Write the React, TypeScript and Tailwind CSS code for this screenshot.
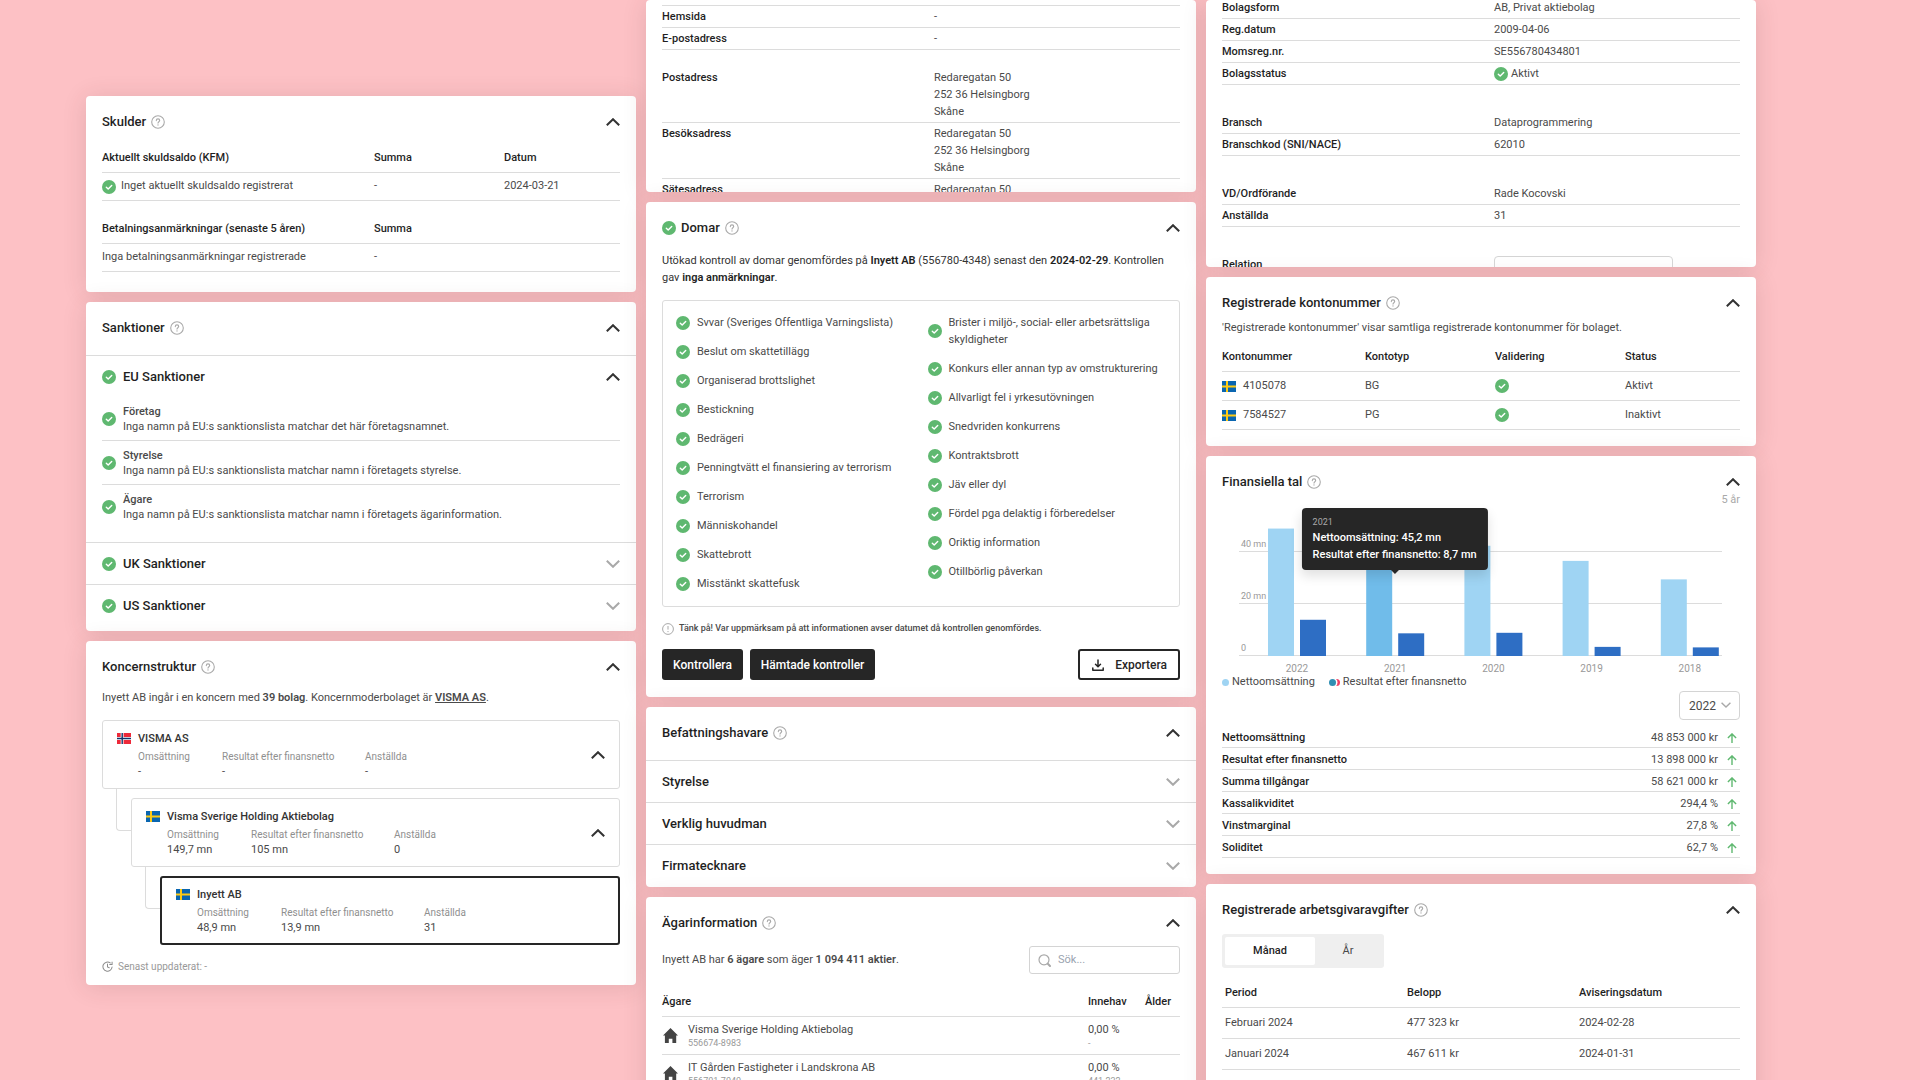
import { useState, type ReactNode } from 'react';
import clsx from 'clsx';

const GREEN = '#5fb870';

function CheckIcon() {
  return (
    <svg viewBox="0 0 14 14" className="h-3.5 w-3.5 shrink-0" aria-hidden="true">
      <circle cx="7" cy="7" r="7" fill={GREEN} />
      <path d="M4.3 7.2 6.2 9l3.5-3.6" fill="none" stroke="#fff" strokeWidth="1.4" strokeLinecap="round" strokeLinejoin="round" />
    </svg>
  );
}

function HelpIcon() {
  return (
    <svg viewBox="0 0 14 14" className="h-3.5 w-3.5 shrink-0" fill="none" stroke="#a9a9a9" aria-hidden="true">
      <circle cx="7" cy="7" r="6.3" strokeWidth="1.1" />
      <path d="M5.3 5.6c0-1 .7-1.7 1.7-1.7s1.7.7 1.7 1.6c0 1.2-1.7 1.3-1.7 2.6" strokeWidth="1.1" strokeLinecap="round" />
      <circle cx="7" cy="9.9" r=".7" fill="#a9a9a9" stroke="none" />
    </svg>
  );
}

function Chevron({ up = false, className = 'h-2 w-3.5' }: { up?: boolean; className?: string }) {
  return (
    <svg
      viewBox="0 0 14 8"
      className={clsx('shrink-0', className)}
      fill="none"
      stroke={up ? '#333' : '#a9a9a9'}
      strokeWidth="2"
      strokeLinejoin="miter"
      aria-hidden="true"
    >
      <path d={up ? 'M.8 7.3 7 1.2l6.2 6.1' : 'M.8.7 7 6.8 13.2.7'} />
    </svg>
  );
}

function FlagSE() {
  return (
    <svg viewBox="0 0 14 11" className="h-[11px] w-3.5 shrink-0" aria-hidden="true">
      <path fill="#0a66b0" d="M0 0h14v11H0z" />
      <path fill="#fdca14" d="M4 0h2v11H4zM0 4.5h14v2H0z" />
    </svg>
  );
}

function FlagNO() {
  return (
    <svg viewBox="0 0 14 11" className="h-[11px] w-3.5 shrink-0" aria-hidden="true">
      <path fill="#ed2939" d="M0 0h14v11H0z" />
      <path fill="#fff" d="M3.7 0h2.9v11H3.7zM0 4.1h14v2.8H0z" />
      <path fill="#12346b" d="M4.5 0h1.4v11H4.5zM0 4.8h14v1.4H0z" />
    </svg>
  );
}

function Card({ children, className }: { children: ReactNode; className?: string }) {
  return (
    <section className={clsx('overflow-hidden rounded-[4px] bg-white shadow-[0_2px_24px_rgba(80,40,45,0.14)]', className)}>
      {children}
    </section>
  );
}

function CardTitle({ title, checked = false }: { title: string; checked?: boolean }) {
  return (
    <header className="flex items-center justify-between px-4 pt-4">
      <h2 className="flex items-center gap-[5px] text-[13px] leading-5 font-medium text-[#1f1f1f]">
        {checked && <CheckIcon />}
        {title}
        <HelpIcon />
      </h2>
      <button aria-label={title}>
        <Chevron up />
      </button>
    </header>
  );
}

function Toggle({ title, open = false, checked = false }: { title: string; open?: boolean; checked?: boolean }) {
  return (
    <button className="flex h-[41px] w-full items-center justify-between px-4 text-left text-[13px] font-medium text-[#1f1f1f]">
      <span className="flex items-center gap-[7px]">
        {checked && <CheckIcon />}
        {title}
      </span>
      <Chevron up={open} />
    </button>
  );
}

const th = 'h-7 border-b border-[#dcdcdc] p-0 text-left font-medium text-[#1f1f1f]';
const td = 'border-b border-[#dcdcdc] p-0';

function Debts() {
  return (
    <Card>
      <CardTitle title="Skulder" />
      <div className="mt-[13px] px-4 pb-5">
        <table className="w-full table-fixed border-separate border-spacing-0">
          <thead>
            <tr>
              <th className={clsx(th, 'w-[272px]')}>Aktuellt skuldsaldo (KFM)</th>
              <th className={clsx(th, 'w-[130px]')}>Summa</th>
              <th className={th}>Datum</th>
            </tr>
          </thead>
          <tbody>
            <tr className="h-7">
              <td className={td}>
                <span className="flex items-center gap-[5px]">
                  <CheckIcon />
                  Inget aktuellt skuldsaldo registrerat
                </span>
              </td>
              <td className={td}>-</td>
              <td className={td}>2024-03-21</td>
            </tr>
          </tbody>
        </table>
        <table className="mt-[15px] w-full table-fixed border-separate border-spacing-0">
          <thead>
            <tr>
              <th className={clsx(th, 'w-[272px]')}>Betalningsanmärkningar (senaste 5 åren)</th>
              <th className={th}>Summa</th>
            </tr>
          </thead>
          <tbody>
            <tr className="h-7">
              <td className={td}>Inga betalningsanmärkningar registrerade</td>
              <td className={td}>-</td>
            </tr>
          </tbody>
        </table>
      </div>
    </Card>
  );
}

const euChecks = [
  { name: 'Företag', text: 'Inga namn på EU:s sanktionslista matchar det här företagsnamnet.' },
  { name: 'Styrelse', text: 'Inga namn på EU:s sanktionslista matchar namn i företagets styrelse.' },
  { name: 'Ägare', text: 'Inga namn på EU:s sanktionslista matchar namn i företagets ägarinformation.' },
];

function Sanctions() {
  return (
    <Card className="pb-[5px]">
      <CardTitle title="Sanktioner" />
      <div className="mt-[17px] border-t border-[#dcdcdc]">
        <Toggle title="EU Sanktioner" open checked />
        <ul className="px-4 pb-[13px]">
          {euChecks.map((check, i) => (
            <li
              key={check.name}
              className={clsx('flex h-11 items-center gap-[7px] leading-[15px]', i < euChecks.length - 1 && 'border-b border-[#dcdcdc]')}
            >
              <CheckIcon />
              <div>
                <p className="font-medium">{check.name}</p>
                <p>{check.text}</p>
              </div>
            </li>
          ))}
        </ul>
      </div>
      <div className="border-t border-[#dcdcdc]">
        <Toggle title="UK Sanktioner" checked />
      </div>
      <div className="border-t border-[#dcdcdc]">
        <Toggle title="US Sanktioner" checked />
      </div>
    </Card>
  );
}

interface Company {
  name: string;
  flag: ReactNode;
  revenue: string;
  result: string;
  employees: string;
}

function CompanyBox({ company, current = false }: { company: Company; current?: boolean }) {
  const figures = [
    { label: 'Omsättning', value: company.revenue, width: 'w-[84px]' },
    { label: 'Resultat efter finansnetto', value: company.result, width: 'w-[143px]' },
    { label: 'Anställda', value: company.employees, width: 'w-[84px]' },
  ];

  return (
    <div
      className={clsx(
        'relative flex h-[69px] items-center justify-between rounded-[3px] bg-white px-3.5',
        current ? 'border-2 border-[#262626]' : 'border border-[#dcdcdc]'
      )}
    >
      <div className="flex gap-[7px]">
        <span className="flex h-[17px] items-center">{company.flag}</span>
        <div>
          <h3 className="leading-[17px] font-medium text-[#333]">{company.name}</h3>
          <dl className="mt-0.5 flex">
            {figures.map((f) => (
              <div key={f.label} className={f.width}>
                <dt className="text-[10px] leading-[15px] whitespace-nowrap text-[#8f8f8f]">{f.label}</dt>
                <dd className="leading-[15px]">{f.value}</dd>
              </div>
            ))}
          </dl>
        </div>
      </div>
      {!current && (
        <button aria-label={company.name}>
          <Chevron up />
        </button>
      )}
    </div>
  );
}

function Connector() {
  return (
    <span className="absolute -top-[9px] -left-[15px] h-[42px] w-[15px] rounded-bl-[4px] border-b border-l border-[#dcdcdc]" />
  );
}

function GroupStructure() {
  return (
    <Card>
      <CardTitle title="Koncernstruktur" />
      <div className="px-4 pb-2.5">
        <p className="mt-3 leading-[17px]">
          Inyett AB ingår i en koncern med <b className="font-semibold">39 bolag</b>. Koncernmoderbolaget är{' '}
          <a href="#visma" className="font-semibold underline">VISMA AS</a>.
        </p>
        <div className="mt-3.5">
          <CompanyBox company={{ name: 'VISMA AS', flag: <FlagNO />, revenue: '-', result: '-', employees: '-' }} />
          <div className="relative mt-[9px] ml-[29px]">
            <Connector />
            <CompanyBox
              company={{ name: 'Visma Sverige Holding Aktiebolag', flag: <FlagSE />, revenue: '149,7 mn', result: '105 mn', employees: '0' }}
            />
            <div className="relative mt-[9px] ml-[29px]">
              <Connector />
              <CompanyBox
                company={{ name: 'Inyett AB', flag: <FlagSE />, revenue: '48,9 mn', result: '13,9 mn', employees: '31' }}
                current
              />
            </div>
          </div>
        </div>
        <p className="mt-[13px] flex items-center gap-[5px] text-[10px] leading-[17px] text-[#999]">
          <svg viewBox="0 0 12 12" className="h-[11px] w-[11px]" fill="none" stroke="#8c8c8c" strokeWidth="1.1" aria-hidden="true">
            <path d="M11 6.6A5 5 0 1 1 9 2.1M6 3.4v3l1.9.9" strokeLinecap="round" />
            <path d="M8 3.9h3V.9" />
          </svg>
          Senast uppdaterat: -
        </p>
      </div>
    </Card>
  );
}

function Row({ label, children }: { label: ReactNode; children: ReactNode }) {
  return (
    <div className="grid grid-cols-[272px_1fr] border-b border-[#dcdcdc] py-0.5 leading-[17px]">
      <dt className="font-medium text-[#1f1f1f]">{label}</dt>
      <dd>{children}</dd>
    </div>
  );
}

function Address() {
  return (
    <>
      <p>Redaregatan 50</p>
      <p>252 36 Helsingborg</p>
      <p>Skåne</p>
    </>
  );
}

function ContactInfo() {
  return (
    <Card className="h-48 px-4">
      <dl className="mt-[5px] border-t border-[#dcdcdc]">
        <Row label="Hemsida">-</Row>
        <Row label="E-postadress">-</Row>
      </dl>
      <dl className="mt-[17px]">
        <Row label="Postadress"><Address /></Row>
        <Row label="Besöksadress"><Address /></Row>
        <Row label="Sätesadress"><Address /></Row>
      </dl>
    </Card>
  );
}

const judgementsLeft = [
  'Svvar (Sveriges Offentliga Varningslista)',
  'Beslut om skattetillägg',
  'Organiserad brottslighet',
  'Bestickning',
  'Bedrägeri',
  'Penningtvätt el finansiering av terrorism',
  'Terrorism',
  'Människohandel',
  'Skattebrott',
  'Misstänkt skattefusk',
];

const judgementsRight = [
  'Brister i miljö-, social- eller arbetsrättsliga skyldigheter',
  'Konkurs eller annan typ av omstrukturering',
  'Allvarligt fel i yrkesutövningen',
  'Snedvriden konkurrens',
  'Kontraktsbrott',
  'Jäv eller dyl',
  'Fördel pga delaktig i förberedelser',
  'Oriktig information',
  'Otillbörlig påverkan',
];

function Judgements() {
  return (
    <Card>
      <CardTitle title="Domar" checked />
      <div className="px-4 pb-[17px]">
        <p className="mt-3.5 leading-[17px] text-[#333]">
          Utökad kontroll av domar genomfördes på <b className="font-semibold text-[#1f1f1f]">Inyett AB</b> (556780-4348) senast den{' '}
          <b className="font-semibold text-[#1f1f1f]">2024-02-29</b>. Kontrollen gav{' '}
          <b className="font-semibold text-[#1f1f1f]">inga anmärkningar</b>.
        </p>
        <div className="mt-3.5 grid grid-cols-2 rounded-[3px] border border-[#dcdcdc] pt-[13px] pb-3.5 pl-[13px]">
          {[judgementsLeft, judgementsRight].map((list) => (
            <ul key={list[0]} className="space-y-3">
              {list.map((item) => (
                <li key={item} className="flex items-center gap-[7px] leading-[17px]">
                  <CheckIcon />
                  {item}
                </li>
              ))}
            </ul>
          ))}
        </div>
        <p className="mt-[13px] flex items-center gap-[5px] text-[9px] leading-[17px] font-medium">
          <svg viewBox="0 0 12 12" className="h-3 w-3" fill="none" stroke="#a9a9a9" aria-hidden="true">
            <circle cx="6" cy="6" r="5.4" />
            <path d="M6 3v3.6M6 8v1.1" />
          </svg>
          Tänk på! Var uppmärksam på att informationen avser datumet då kontrollen genomfördes.
        </p>
        <div className="mt-3 flex h-[31px] gap-[7px] text-[12px] font-medium">
          <button className="rounded-[3px] bg-[#262626] px-[11px] text-white">Kontrollera</button>
          <button className="rounded-[3px] bg-[#262626] px-[11px] text-white">Hämtade kontroller</button>
          <button className="ml-auto flex items-center gap-[11px] rounded-[3px] border-2 border-[#262626] pr-[11px] pl-3 text-[#262626]">
            <svg viewBox="0 0 12 12" className="h-3 w-3" fill="none" stroke="#262626" strokeWidth="1.5" strokeLinecap="round" strokeLinejoin="round" aria-hidden="true">
              <path d="M6 1v6.6M3.5 5.3 6 7.8l2.5-2.5M.8 9v2.2h10.4V9" />
            </svg>
            Exportera
          </button>
        </div>
      </div>
    </Card>
  );
}

function Positions() {
  return (
    <Card className="pb-px">
      <CardTitle title="Befattningshavare" />
      <div className="mt-[17px]">
        {['Styrelse', 'Verklig huvudman', 'Firmatecknare'].map((title) => (
          <div key={title} className="border-t border-[#dcdcdc]">
            <Toggle title={title} />
          </div>
        ))}
      </div>
    </Card>
  );
}

const owners = [
  { name: 'Visma Sverige Holding Aktiebolag', id: '556674-8983', share: '0,00 %', count: '-' },
  { name: 'IT Gården Fastigheter i Landskrona AB', id: '556701-7040', share: '0,00 %', count: '441 232' },
];

function Owners() {
  return (
    <Card>
      <CardTitle title="Ägarinformation" />
      <div className="px-4 pb-4">
        <div className="mt-[13px] flex items-center justify-between">
          <p>
            Inyett AB har <b className="font-semibold">6 ägare</b> som äger <b className="font-semibold">1 094 411 aktier</b>.
          </p>
          <label className="flex h-7 w-[151px] items-center gap-[7px] rounded-[3px] border border-[#d4d4d4] px-2">
            <svg viewBox="0 0 13 13" className="h-[13px] w-[13px] shrink-0" fill="none" stroke="#a9a9a9" aria-hidden="true">
              <circle cx="6" cy="5.8" r="5" strokeWidth="1.2" />
              <path d="m9.8 9.8 2.2 2.2" strokeWidth="2" strokeLinecap="round" />
            </svg>
            <input type="search" placeholder="Sök..." aria-label="Sök" className="w-full min-w-0 outline-none placeholder:text-[#9aa3af]" />
          </label>
        </div>
        <table className="mt-[15px] w-full table-fixed border-separate border-spacing-0">
          <thead>
            <tr>
              <th className={th}>Ägare</th>
              <th className={clsx(th, 'w-[57px]')}>Innehav</th>
              <th className={clsx(th, 'w-[35px]')}>Ålder</th>
            </tr>
          </thead>
          <tbody>
            {owners.map((owner) => (
              <tr key={owner.id} className="h-[38px]">
                <td className={td}>
                  <div className="flex items-center gap-2.5 pl-px">
                    <svg viewBox="0 0 15 15" className="h-[15px] w-[15px] shrink-0" fill="#444" aria-hidden="true">
                      <path d="M7.5 0 15 7.6h-1.8V15H9.4v-4.3H5.8V15H1.9V7.6H0L7.5 0Z" />
                    </svg>
                    <div>
                      <p className="leading-[14px]">{owner.name}</p>
                      <p className="text-[9px] leading-3 text-[#999]">{owner.id}</p>
                    </div>
                  </div>
                </td>
                <td className={td}>
                  <p className="leading-[14px]">{owner.share}</p>
                  <p className="text-[9px] leading-3 text-[#999]">{owner.count}</p>
                </td>
                <td className={td} />
              </tr>
            ))}
          </tbody>
        </table>
      </div>
    </Card>
  );
}

function CompanyInfo() {
  return (
    <Card className="h-[267px] px-4">
      <dl className="-mt-[3px] space-y-[27px]">
        <div>
          <Row label="Bolagsform">AB, Privat aktiebolag</Row>
          <Row label="Reg.datum">2009-04-06</Row>
          <Row label="Momsreg.nr.">SE556780434801</Row>
          <Row label="Bolagsstatus">
            <span className="flex items-center gap-[3px]">
              <CheckIcon />
              Aktivt
            </span>
          </Row>
        </div>
        <div>
          <Row label="Bransch">Dataprogrammering</Row>
          <Row label="Branschkod (SNI/NACE)">62010</Row>
        </div>
        <div>
          <Row label="VD/Ordförande">Rade Kocovski</Row>
          <Row label="Anställda">31</Row>
        </div>
        <Row label={<label htmlFor="relation">Relation</label>}>
          <select id="relation" className="h-[30px] w-[179px] appearance-none rounded-[4px] border border-[#d4d4d4] px-3">
            <option>Ej vald</option>
          </select>
        </Row>
      </dl>
    </Card>
  );
}

const accounts = [
  { number: '4105078', type: 'BG', status: 'Aktivt' },
  { number: '7584527', type: 'PG', status: 'Inaktivt' },
];

function Accounts() {
  return (
    <Card>
      <CardTitle title="Registrerade kontonummer" />
      <div className="px-4 pb-4">
        <p className="mt-1.5 leading-[17px]">'Registrerade kontonummer' visar samtliga registrerade kontonummer för bolaget.</p>
        <table className="mt-2 w-full table-fixed border-separate border-spacing-0">
          <thead>
            <tr>
              <th className={clsx(th, 'w-[143px]')}>Kontonummer</th>
              <th className={clsx(th, 'w-[130px]')}>Kontotyp</th>
              <th className={clsx(th, 'w-[130px]')}>Validering</th>
              <th className={th}>Status</th>
            </tr>
          </thead>
          <tbody>
            {accounts.map((account) => (
              <tr key={account.number} className="h-[29px]">
                <td className={td}>
                  <span className="flex items-center gap-[7px]">
                    <FlagSE />
                    {account.number}
                  </span>
                </td>
                <td className={td}>{account.type}</td>
                <td className={td}><CheckIcon /></td>
                <td className={td}>{account.status}</td>
              </tr>
            ))}
          </tbody>
        </table>
      </div>
    </Card>
  );
}

const years = [
  { year: 2022, revenue: 48.9, result: 13.9 },
  { year: 2021, revenue: 45.2, result: 8.7 },
  { year: 2020, revenue: 42.3, result: 8.9 },
  { year: 2019, revenue: 36.5, result: 3.5 },
  { year: 2018, revenue: 29.4, result: 3.3 },
];

const CHART_BASE = 148;
const PX_PER_MN = 2.606;

function Chart() {
  return (
    <div className="relative">
      <svg viewBox="0 0 518 166" className="block w-full" role="img" aria-label="Nettoomsättning">
        {[40, 20, 0].map((value) => {
          const y = Math.round(CHART_BASE - value * PX_PER_MN);
          return (
            <g key={value}>
              <path d={`M17 ${y - 0.5}H500`} stroke="#dcdcdc" />
              <text x="19" y={y - 5} fontSize="9" fill="#999">{value === 0 ? '0' : `${value} mn`}</text>
            </g>
          );
        })}
        {years.map((d, i) => {
          const x = 46 + i * 98.2;
          return (
            <g key={d.year}>
              <rect
                x={x}
                y={CHART_BASE - d.revenue * PX_PER_MN}
                width="26"
                height={d.revenue * PX_PER_MN}
                fill={d.year === 2021 ? '#70bcea' : '#9fd4f3'}
              />
              <rect x={x + 32} y={CHART_BASE - d.result * PX_PER_MN} width="26" height={d.result * PX_PER_MN} fill="#2e6ec4" />
              <text x={x + 29} y="164" fontSize="10" fill="#999" textAnchor="middle">{d.year}</text>
            </g>
          );
        })}
      </svg>
      <div className="absolute top-0 left-1/3 -translate-x-1/2 rounded-[4px] bg-[#262626] px-[11px] py-[7px] font-medium whitespace-nowrap text-white shadow-[0_6px_12px_rgba(0,0,0,0.12)]">
        <p className="text-[9px] leading-[14px] font-normal text-[#a9a9a9]">2021</p>
        <p className="leading-[17px]">Nettoomsättning: 45,2 mn</p>
        <p className="leading-[17px]">Resultat efter finansnetto: 8,7 mn</p>
        <svg viewBox="0 0 8 4" className="absolute top-full left-1/2 h-1 w-2 -translate-x-1/2" aria-hidden="true">
          <path d="M0 0h8L4 4Z" fill="#262626" />
        </svg>
      </div>
    </div>
  );
}

const keyFigures = [
  ['Nettoomsättning', '48 853 000 kr'],
  ['Resultat efter finansnetto', '13 898 000 kr'],
  ['Summa tillgångar', '58 621 000 kr'],
  ['Kassalikviditet', '294,4 %'],
  ['Vinstmarginal', '27,8 %'],
  ['Soliditet', '62,7 %'],
];

function Financials() {
  const [year, setYear] = useState('2022');

  return (
    <Card>
      <CardTitle title="Finansiella tal" />
      <div className="px-4 pb-4">
        <p className="text-right leading-4 text-[#a9a9a9]">5 år</p>
        <Chart />
        <div className="flex items-center leading-4">
          <span className="mr-[3px] h-[7px] w-[7px] rounded-full bg-[#9fd4f3]" />
          Nettoomsättning
          <svg viewBox="0 0 11 7" className="mr-[3px] ml-3.5 h-[7px] w-[11px]" aria-hidden="true">
            <circle cx="7.5" cy="3.5" r="3.5" fill="#ef4065" />
            <circle cx="4.4" cy="3.5" r="4.1" fill="#fff" />
            <circle cx="3.5" cy="3.5" r="3.5" fill="#2f8fb3" />
          </svg>
          Resultat efter finansnetto
        </div>
        <div className="mt-px flex justify-end">
          <div className="relative">
            <select
              aria-label="År"
              value={year}
              onChange={(e) => setYear(e.target.value)}
              className="h-[29px] w-[61px] appearance-none rounded-[4px] border border-[#d4d4d4] bg-white pl-[9px] text-[12px]"
            >
              {years.map((d) => (
                <option key={d.year}>{d.year}</option>
              ))}
            </select>
            <Chevron className="pointer-events-none absolute top-[11px] right-[9px] h-1.5 w-2.5" />
          </div>
        </div>
        <dl className="mt-1.5">
          {keyFigures.map(([label, value]) => (
            <div key={label} className="flex items-center border-b border-[#dcdcdc] pt-[3px] pb-px leading-[17px]">
              <dt className="font-medium text-[#1f1f1f]">{label}</dt>
              <dd className="ml-auto flex items-center gap-[9px] pr-[3px]">
                {value}
                <svg viewBox="0 0 10 10" className="h-2.5 w-2.5" fill="none" stroke={GREEN} strokeWidth="1.4" aria-hidden="true">
                  <path d="M5 10V1M.9 5 5 .9 9.1 5" />
                </svg>
              </dd>
            </div>
          ))}
        </dl>
      </div>
    </Card>
  );
}

const fees = [
  { period: 'Februari 2024', amount: '477 323 kr', date: '2024-02-28' },
  { period: 'Januari 2024', amount: '467 611 kr', date: '2024-01-31' },
  { period: 'December 2023', amount: '471 209 kr', date: '2023-12-29' },
];

function EmployerFees() {
  const [mode, setMode] = useState('Månad');

  return (
    <Card>
      <CardTitle title="Registrerade arbetsgivaravgifter" />
      <div className="px-4 pb-4">
        <div className="mt-3.5 flex h-[34px] w-fit rounded-[3px] bg-[#efefef] p-[3px]">
          {['Månad', 'År'].map((name) => (
            <button
              key={name}
              onClick={() => setMode(name)}
              className={clsx(
                'rounded-[2px]',
                name === 'Månad' ? 'w-[90px]' : 'w-[66px]',
                mode === name && 'bg-white font-medium text-[#1f1f1f]'
              )}
            >
              {name}
            </button>
          ))}
        </div>
        <table className="mt-3 w-full table-fixed border-separate border-spacing-0">
          <thead>
            <tr>
              <th className={clsx(th, 'w-[185px] pl-[3px]')}>Period</th>
              <th className={clsx(th, 'w-[172px]')}>Belopp</th>
              <th className={th}>Aviseringsdatum</th>
            </tr>
          </thead>
          <tbody>
            {fees.map((fee) => (
              <tr key={fee.period} className="h-[31px]">
                <td className={clsx(td, 'pl-[3px]')}>{fee.period}</td>
                <td className={td}>{fee.amount}</td>
                <td className={td}>{fee.date}</td>
              </tr>
            ))}
          </tbody>
        </table>
      </div>
    </Card>
  );
}

export default function App() {
  return (
    <main className="grid h-screen grid-cols-3 items-start gap-2.5 overflow-hidden bg-[#fdc1c5] pr-[164px] pl-[86px] font-[Roboto,sans-serif] text-[11px] text-[#4a4a4a]">
      <div className="space-y-2.5 pt-24">
        <Debts />
        <Sanctions />
        <GroupStructure />
      </div>
      <div className="space-y-2.5">
        <ContactInfo />
        <Judgements />
        <Positions />
        <Owners />
      </div>
      <div className="space-y-2.5">
        <CompanyInfo />
        <Accounts />
        <Financials />
        <EmployerFees />
      </div>
    </main>
  );
}
